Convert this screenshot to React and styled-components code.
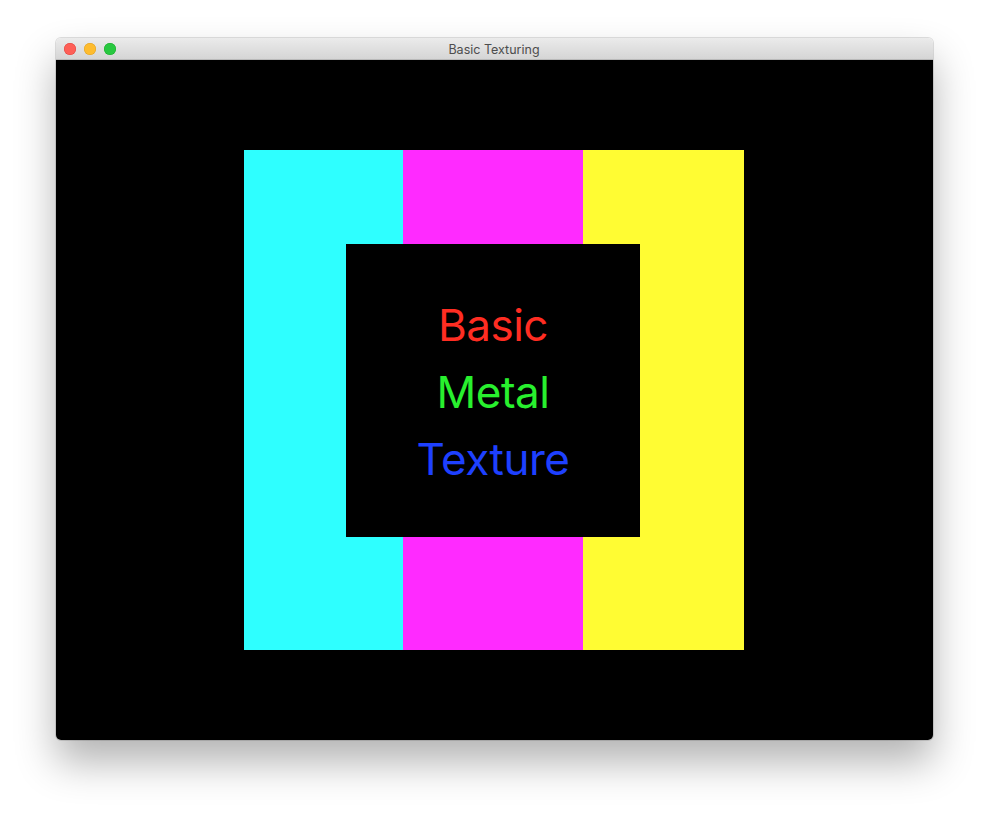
import React from "react";
import styled, { createGlobalStyle } from "styled-components";

const GlobalStyle = createGlobalStyle`
  html, body {
    margin: 0;
    padding: 0;
    background: #ffffff;
  }
`;

const Page = styled.div`
  width: 989px;
  height: 814px;
  padding: 38px 0 0 56px;
  box-sizing: border-box;
  background: #ffffff;
`;

const Window = styled.div`
  width: 877px;
  height: 702px;
  border-radius: 5px;
  overflow: hidden;
  display: flex;
  flex-direction: column;
  box-shadow: 0 22px 40px rgba(0, 0, 0, 0.3), 0 0 0 1px rgba(0, 0, 0, 0.12);
`;

const TitleBar = styled.div`
  height: 22px;
  flex: none;
  position: relative;
  display: flex;
  align-items: center;
  justify-content: center;
  background: linear-gradient(#ebebeb, #d5d5d5);
  border-bottom: 1px solid #b9b9b9;
  box-sizing: border-box;
`;

const Lights = styled.div`
  position: absolute;
  left: 8px;
  top: 5px;
  display: flex;
  gap: 8px;
`;

const Light = styled.span`
  width: 12px;
  height: 12px;
  border-radius: 50%;
  background: ${(p) => p.color};
  box-shadow: inset 0 0 0 0.5px ${(p) => p.rim};
`;

const Title = styled.div`
  font-family: "Inter", "Liberation Sans", sans-serif;
  font-size: 12.5px;
  color: #4d4d4d;
  margin-left: -1px;
  padding-top: 1px;
`;

const Content = styled.div`
  flex: 1;
  background: #000000;
  display: flex;
  align-items: center;
  justify-content: center;
`;

const Texture = styled.div`
  width: 500px;
  height: 500px;
  position: relative;
  display: flex;
  margin-left: -1px;
`;

const Stripe = styled.div`
  width: ${(p) => p.w}px;
  height: 100%;
  background: ${(p) => p.color};
`;

const Inner = styled.div`
  position: absolute;
  left: 102px;
  top: 94px;
  width: 294px;
  height: 293px;
  background: #000000;
  box-sizing: border-box;
  padding-top: 48px;
  display: flex;
  flex-direction: column;
  align-items: center;
`;

const Word = styled.div`
  font-family: "Inter", "Liberation Sans", sans-serif;
  font-size: 44px;
  letter-spacing: -0.5px;
  line-height: 67px;
  color: ${(p) => p.color};
`;

export default function App() {
  return (
    <>
      <GlobalStyle />
      <Page>
        <Window>
          <TitleBar>
            <Lights>
              <Light color="#fe5f57" rim="#e0443e" />
              <Light color="#febc2e" rim="#dea123" />
              <Light color="#28c840" rim="#1aab29" />
            </Lights>
            <Title>Basic Texturing</Title>
          </TitleBar>
          <Content>
            <Texture>
              <Stripe w={159} color="#2effff" />
              <Stripe w={180} color="#ff2aff" />
              <Stripe w={161} color="#fffc33" />
              <Inner>
                <Word color="#ff2d22">Basic</Word>
                <Word color="#28f02e">Metal</Word>
                <Word color="#1e40ff">Texture</Word>
              </Inner>
            </Texture>
          </Content>
        </Window>
      </Page>
    </>
  );
}
